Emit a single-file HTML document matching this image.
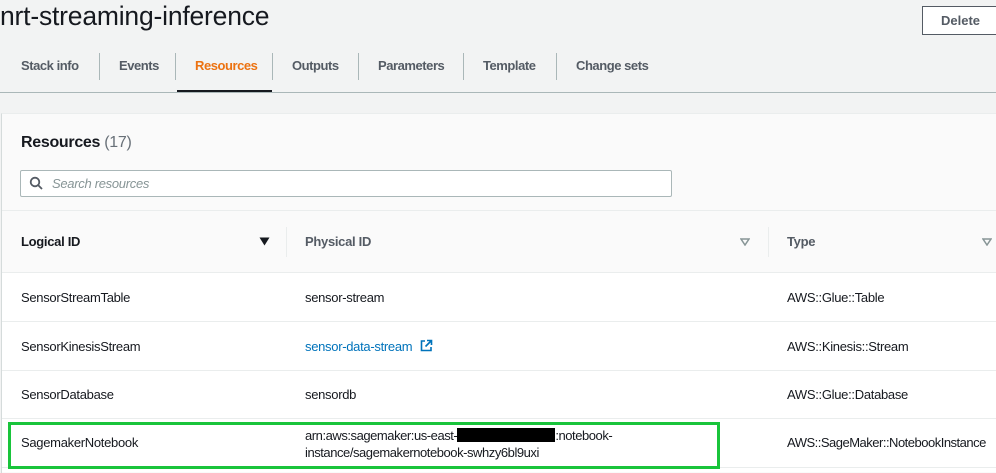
<!DOCTYPE html>
<html><head><style>
*{margin:0;padding:0;box-sizing:border-box}
body{width:996px;height:472px;overflow:hidden;background:#f2f3f3;font-family:"Liberation Sans",Arial,sans-serif;color:#16191f;position:relative}
.a{position:absolute;white-space:nowrap}
.tab{position:absolute;top:58px;font-size:13px;font-weight:bold;color:#545b64;letter-spacing:-0.45px}
.sep{position:absolute;top:53px;width:1px;height:27px;background:#aab7b8}
.cell{position:absolute;font-size:13px;color:#16191f;letter-spacing:-0.3px}
.hl{position:absolute;left:2px;right:0;height:1px;background:#eaeded}
</style></head><body>
<div class="a" style="left:0;top:1px;font-size:26.5px;color:#16191f;letter-spacing:-0.2px">nrt-streaming-inference</div>
<div class="a" style="left:922px;top:6px;width:80px;height:29px;border:1px solid #545b64;background:#fff;font-size:13px;font-weight:bold;color:#545b64;padding:6px 0 0 18px">Delete</div>
<div class="tab" style="left:21px">Stack info</div><div class="sep" style="left:99px"></div>
<div class="tab" style="left:119px">Events</div><div class="sep" style="left:175px"></div>
<div class="tab" style="left:195px;color:#ec7211">Resources</div><div class="sep" style="left:272px"></div>
<div class="tab" style="left:292px">Outputs</div><div class="sep" style="left:358px"></div>
<div class="tab" style="left:378px">Parameters</div><div class="sep" style="left:463px"></div>
<div class="tab" style="left:483px">Template</div><div class="sep" style="left:556px"></div>
<div class="tab" style="left:576px">Change sets</div>
<div class="a" style="left:177px;top:90px;width:95px;height:2px;background:#16191f"></div>
<div class="a" style="left:0;top:92px;width:996px;height:1px;background:#aab7b8"></div>
<div class="a" style="left:1px;top:113px;width:996px;height:360px;background:#fafafa;border-left:1px solid #d5dbdb;border-top:1px solid #eaeded"></div>
<div class="a" style="left:21px;top:134px;font-size:16px;font-weight:bold;letter-spacing:-0.3px">Resources <span style="font-weight:normal;color:#687078">(17)</span></div>
<div class="a" style="left:20px;top:170px;width:652px;height:27px;border:1px solid #aab7b8;background:#fff;border-radius:2px"></div>
<svg class="a" style="left:29px;top:176px" width="14" height="14" viewBox="0 0 14 14"><circle cx="6" cy="6" r="4.3" fill="none" stroke="#545b64" stroke-width="1.8"/><line x1="9" y1="9" x2="13" y2="13" stroke="#545b64" stroke-width="1.8"/></svg>
<div class="a" style="left:52px;top:176px;font-size:13px;font-style:italic;color:#879596;letter-spacing:-0.3px">Search resources</div>
<div class="hl" style="top:210px"></div>
<div class="cell" style="left:21px;top:234px;font-weight:bold">Logical ID</div>
<svg class="a" style="left:259px;top:237px" width="11" height="9" viewBox="0 0 11 9"><path d="M0.5 0.5H10.5L5.5 8.5Z" fill="#16191f"/></svg>
<div class="a" style="left:286px;top:227px;width:1px;height:30px;background:#eaeded"></div>
<div class="cell" style="left:305px;top:234px;font-weight:bold;color:#545b64">Physical ID</div>
<svg class="a" style="left:740px;top:238px" width="10" height="8" viewBox="0 0 10 8"><path d="M1 1H9L5 7Z" fill="none" stroke="#879596" stroke-width="1.5"/></svg>
<div class="a" style="left:768px;top:227px;width:1px;height:30px;background:#eaeded"></div>
<div class="cell" style="left:787px;top:234px;font-weight:bold;color:#545b64">Type</div>
<svg class="a" style="left:982px;top:238px" width="10" height="8" viewBox="0 0 10 8"><path d="M1 1H9L5 7Z" fill="none" stroke="#879596" stroke-width="1.5"/></svg>
<div class="a" style="left:2px;top:272px;width:996px;height:200px;background:#fff"></div>
<div class="hl" style="top:272px"></div><div class="hl" style="top:321px"></div><div class="hl" style="top:370px"></div><div class="hl" style="top:418px"></div><div class="hl" style="top:467px"></div>
<div class="cell" style="left:21px;top:290px">SensorStreamTable</div>
<div class="cell" style="left:305px;top:290px">sensor-stream</div>
<div class="cell" style="left:787px;top:290px">AWS::Glue::Table</div>
<div class="cell" style="left:21px;top:339px">SensorKinesisStream</div>
<div class="cell" style="left:305px;top:339px;color:#0073bb">sensor-data-stream</div>
<svg class="a" style="left:420px;top:339px" width="13" height="13" viewBox="0 0 13 13"><path d="M5 2H1.5v9.5H11V8" fill="none" stroke="#0073bb" stroke-width="1.6"/><path d="M7 1.5h4.5V6M11.5 1.5L5.5 7.5" fill="none" stroke="#0073bb" stroke-width="1.6"/></svg>
<div class="cell" style="left:787px;top:339px">AWS::Kinesis::Stream</div>
<div class="cell" style="left:21px;top:387px">SensorDatabase</div>
<div class="cell" style="left:305px;top:387px">sensordb</div>
<div class="cell" style="left:787px;top:387px">AWS::Glue::Database</div>
<div class="cell" style="left:21px;top:435px">SagemakerNotebook</div>
<div class="cell" style="left:305px;top:427px;line-height:17px;letter-spacing:-0.45px">arn:aws:sagemaker:us-east-<span style="display:inline-block;width:98px;height:14px;background:#000;vertical-align:-2px"></span>:notebook-<br>instance/sagemakernotebook-swhzy6bl9uxi</div>
<div class="cell" style="left:787px;top:435px;letter-spacing:-0.5px">AWS::SageMaker::NotebookInstance</div>
<div class="a" style="left:8px;top:422px;width:712px;height:47px;border:3px solid #19c43b"></div>
</body></html>
